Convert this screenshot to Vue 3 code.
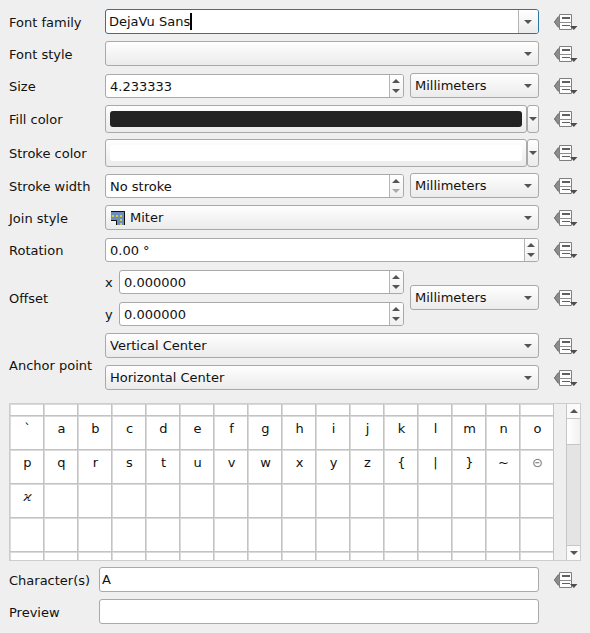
<script setup>
import { h, ref } from 'vue'

const fontFamily = ref('DejaVu Sans')
const size = ref('4.233333')
const strokeWidth = ref('No stroke')
const rotation = ref('0.00 °')
const offsetX = ref('0.000000')
const offsetY = ref('0.000000')
const characters = ref('A')
const preview = ref('')

const glyphRows = [
  [...'`abcdefghijklmno'],
  [...'pqrstuvwxyz{|}~⊝'],
  ['ϰ', ...Array(15).fill('')],
  Array(16).fill(''),
]

// Data-defined override button shown at the end of most rows
const OverrideButton = (props) =>
  h('button', { class: 'override', type: 'button', 'aria-label': props.label }, [
    h('svg', { width: 24, height: 16, viewBox: '0 0 24 16', 'aria-hidden': 'true' }, [
      h('path', { d: 'M0 8 4 2.5h1v11H4z', fill: '#8a8c8e' }),
      h('path', { d: 'M0.4 8 4.5 2.7M0.4 8l4.1 5.3', stroke: '#6f7173', fill: 'none' }),
      h('path', { d: 'M5.5.5h12v15h-12z', fill: '#fcfcfc', stroke: '#7d7f80' }),
      h('path', { d: 'M5 8.5h13', stroke: '#8b8d8e' }),
      h('path', { d: 'M8 3h8v2H8z', fill: '#5d5f61' }),
      h('path', { d: 'M8 11h8v1H8z', fill: '#5d5f61' }),
      h('path', { d: 'M16 12h7.5l-3.7 4z', fill: '#4d4d4d' }),
    ]),
  ])
OverrideButton.props = ['label']

const SpinButtons = (props) =>
  h('span', { class: 'steps' }, [
    h('button', { type: 'button', class: 'step', 'aria-label': 'Increase' }, [h('i', { class: 'up' })]),
    h('button', { type: 'button', class: 'step', 'aria-label': 'Decrease', disabled: props.atMin }, [
      h('i', { class: 'down' }),
    ]),
  ])
SpinButtons.props = ['atMin']
</script>

<template>
  <form class="panel" @submit.prevent>
    <div class="row">
      <label for="family">Font family</label>
      <div class="field editable">
        <input id="family" v-model="fontFamily" type="text" />
        <span class="caret"></span>
        <button type="button" class="drop" aria-label="Show fonts"><i class="down wide"></i></button>
      </div>
      <OverrideButton label="Override font family" />
    </div>

    <div class="row">
      <label for="style">Font style</label>
      <div class="combo"><select id="style"><option></option></select></div>
      <OverrideButton label="Override font style" />
    </div>

    <div class="row">
      <label for="size">Size</label>
      <div class="pair">
        <div class="field"><input id="size" v-model="size" type="text" /><SpinButtons /></div>
        <div class="combo unit"><select aria-label="Size unit"><option>Millimeters</option></select></div>
      </div>
      <OverrideButton label="Override size" />
    </div>

    <div class="row tall">
      <label for="fill">Fill color</label>
      <div class="color">
        <button id="fill" type="button" class="swatch"><span class="dark"></span></button>
        <button type="button" class="menu" aria-label="Fill color menu"><i class="down"></i></button>
      </div>
      <OverrideButton label="Override fill color" />
    </div>

    <div class="row tall">
      <label for="stroke">Stroke color</label>
      <div class="color">
        <button id="stroke" type="button" class="swatch"><span class="light"></span></button>
        <button type="button" class="menu" aria-label="Stroke color menu"><i class="down"></i></button>
      </div>
      <OverrideButton label="Override stroke color" />
    </div>

    <div class="row">
      <label for="width">Stroke width</label>
      <div class="pair">
        <div class="field"><input id="width" v-model="strokeWidth" type="text" /><SpinButtons :at-min="true" /></div>
        <div class="combo unit"><select aria-label="Stroke width unit"><option>Millimeters</option></select></div>
      </div>
      <OverrideButton label="Override stroke width" />
    </div>

    <div class="row">
      <label for="join">Join style</label>
      <div class="combo with-icon">
        <select id="join"><option>Miter</option></select>
        <svg class="join-icon" width="14" height="14" viewBox="0 0 14 14" aria-hidden="true">
          <path d="M0 0h14v14H5V9H0z" fill="#6c8ebb" />
          <path d="M0 .5h13.5V14M0 9.5h5.5V14" fill="none" stroke="#111" />
          <path d="M1 4h2v2H1zM5 4h2v2H5zM9 4h2v2H9zM9 8h2v2H9zM9 12h2v2H9z" fill="#d8cb3c" />
        </svg>
      </div>
      <OverrideButton label="Override join style" />
    </div>

    <div class="row">
      <label for="rotation">Rotation</label>
      <div class="field"><input id="rotation" v-model="rotation" type="text" /><SpinButtons /></div>
      <OverrideButton label="Override rotation" />
    </div>

    <div class="row">
      <span>Offset</span>
      <div class="pair">
        <div class="stack">
          <div class="axis">
            <label for="ox">x</label>
            <div class="field"><input id="ox" v-model="offsetX" type="text" /><SpinButtons /></div>
          </div>
          <div class="axis">
            <label for="oy">y</label>
            <div class="field"><input id="oy" v-model="offsetY" type="text" /><SpinButtons /></div>
          </div>
        </div>
        <div class="combo unit"><select aria-label="Offset unit"><option>Millimeters</option></select></div>
      </div>
      <OverrideButton label="Override offset" />
    </div>

    <div class="row">
      <span>Anchor point</span>
      <div class="stack anchors">
        <div class="combo"><select aria-label="Vertical anchor"><option>Vertical Center</option></select></div>
        <div class="combo"><select aria-label="Horizontal anchor"><option>Horizontal Center</option></select></div>
      </div>
      <div class="stack anchors">
        <OverrideButton label="Override vertical anchor" />
        <OverrideButton label="Override horizontal anchor" />
      </div>
    </div>

    <div class="chars">
      <table aria-label="Characters">
        <tbody>
          <tr class="cut-top"><td v-for="n in 16" :key="n"></td></tr>
          <tr v-for="(row, r) in glyphRows" :key="r">
            <td v-for="(g, c) in row" :key="c" :class="{ thin: g === '⊝', slanted: g === 'ϰ' }">{{ g }}</td>
          </tr>
          <tr class="cut-bottom"><td v-for="n in 16" :key="n"></td></tr>
        </tbody>
      </table>
      <div class="scrollbar">
        <button type="button" aria-label="Scroll up"><i class="up wide"></i></button>
        <div class="thumb"></div>
        <div class="track"></div>
        <button type="button" aria-label="Scroll down"><i class="down wide"></i></button>
      </div>
    </div>

    <div class="row low">
      <label for="chars">Character(s)</label>
      <input id="chars" v-model="characters" class="line" type="text" />
      <OverrideButton label="Override characters" />
    </div>

    <div class="row low">
      <label for="preview">Preview</label>
      <input id="preview" v-model="preview" class="line" type="text" readonly />
    </div>
  </form>
</template>

<style>
body {
  margin: 0;
  background: #efefef;
}
</style>

<style scoped>
.panel {
  display: flex;
  flex-direction: column;
  gap: 6px;
  padding: 9px 9px 8px;
  color: #111;
  font: 13px/15px "DejaVu Sans", sans-serif;
}
.panel :deep(*) {
  box-sizing: border-box;
}
.panel :deep(input),
.panel :deep(select),
.panel :deep(button) {
  margin: 0;
  color: inherit;
  font: inherit;
  outline: none;
}
.row {
  display: grid;
  grid-template-columns: 96px minmax(0, 1fr) 42px;
  align-items: center;
  min-height: 26px;
}
.row.tall {
  min-height: 28px;
}
.row.low {
  grid-template-columns: 90px minmax(0, 1fr) 42px;
}
.row > label,
.row > span {
  white-space: nowrap;
}
.field {
  display: flex;
  flex: 1;
  min-width: 0;
  height: 24px;
  overflow: hidden;
  border: 1px solid #a9a9a9;
  border-radius: 3px;
  background: #fff;
}
.field input {
  flex: 1;
  width: 0;
  min-width: 0;
  padding: 0 4px;
  border: 0;
  background: transparent;
}
.editable {
  position: relative;
  align-self: start;
  height: 25px;
  border-color: #2d73a3;
}
.editable input {
  padding: 0 3px;
  caret-color: transparent;
}
.caret {
  position: absolute;
  top: 3px;
  left: 84px;
  width: 2px;
  height: 17px;
  background: #000;
}
.drop {
  display: flex;
  align-items: center;
  justify-content: center;
  width: 20px;
  padding: 0 2px 0 0;
  border: 0;
  border-left: 1px solid #b4b4b4;
  background: linear-gradient(#fff, #ebebeb);
}
.combo {
  position: relative;
  align-self: start;
  height: 25px;
}
.combo::after {
  content: "";
  position: absolute;
  top: 11px;
  right: 7px;
  border: solid transparent;
  border-width: 4px 4px 0;
  border-top-color: #555;
  pointer-events: none;
}
.combo select {
  display: block;
  width: 100%;
  height: 25px;
  padding: 0 24px 0 4px;
  appearance: none;
  border: 1px solid #a9a9a9;
  border-radius: 3px;
  background: linear-gradient(#fefefe, #ebebeb);
}
.with-icon select {
  padding-left: 24px;
}
.join-icon {
  position: absolute;
  top: 6px;
  left: 6px;
  pointer-events: none;
}
.pair {
  display: flex;
  align-items: center;
  gap: 6px;
}
.unit {
  flex: 0 0 129px;
  align-self: center;
  height: 26px;
}
.stack {
  display: flex;
  flex: 1;
  flex-direction: column;
  gap: 6px;
}
.axis {
  display: flex;
  align-items: center;
  height: 26px;
}
.axis label {
  width: 14px;
}
.anchors {
  padding-bottom: 6px;
}
.anchors .combo {
  width: 100%;
  height: 26px;
}
.panel :deep(.steps) {
  display: flex;
  flex-direction: column;
  width: 14px;
  padding: 1px 1px 1px 0;
  border-left: 1px solid #b4b4b4;
  background: linear-gradient(#fff, #f0f0f0);
}
.panel :deep(.step) {
  display: flex;
  flex: 1;
  align-items: center;
  justify-content: center;
  min-height: 0;
  padding: 0;
  border: 0;
  background: none;
}
.panel :deep(.up),
.panel :deep(.down) {
  width: 0;
  height: 0;
  border: solid transparent;
}
.panel :deep(.up) {
  border-width: 0 4px 4px;
  border-bottom-color: #555;
}
.panel :deep(.down) {
  border-width: 4px 4px 0;
  border-top-color: #555;
}
.panel :deep(.step:disabled .down) {
  border-top-color: #aaa;
}
.color {
  display: flex;
  height: 28px;
}
.swatch,
.menu {
  display: flex;
  border: 1px solid #a9a9a9;
  border-radius: 3px;
  background: linear-gradient(#fefefe, #ebebeb);
}
.swatch {
  flex: 1;
  padding: 5px 4px;
}
.swatch span {
  flex: 1;
  height: 16px;
  border-radius: 3px;
}
.dark {
  background: #232323;
}
.light {
  background: #fff;
}
.menu {
  align-items: center;
  justify-content: center;
  width: 12px;
  padding: 0;
}
.panel :deep(.override) {
  display: flex;
  align-items: center;
  width: 42px;
  height: 26px;
  padding: 0 0 0 15px;
  border: 0;
  background: none;
}
.chars {
  display: flex;
  height: 158px;
  overflow: hidden;
  border: 1px solid #cdcdcd;
}
table {
  flex: 1;
  width: 100%;
  table-layout: fixed;
  border-collapse: separate;
  border-spacing: 0;
}
td {
  height: 34px;
  padding: 0 0 9px 2px;
  border: solid #c3c3c3;
  border-width: 0 1px 1px 0;
  background: #fff;
  box-shadow: inset 1px 0 #dadada, inset 0 1px #dadada;
  text-align: center;
}
.cut-top td {
  height: 12px;
  padding: 0;
}
.cut-bottom td {
  height: 9px;
  padding: 0;
  border-bottom: 0;
}
.thin {
  color: #777;
}
.slanted {
  font-family: "DejaVu Serif", serif;
  font-style: italic;
}
.scrollbar {
  display: flex;
  flex: 0 0 14px;
  flex-direction: column;
  margin-left: 12px;
  border-left: 1px solid #c6c6c6;
}
.scrollbar button {
  display: flex;
  align-items: center;
  justify-content: center;
  height: 14px;
  padding: 0;
  border: 0;
  background: #fafafa;
}
.thumb {
  height: 27px;
  border: solid #c6c6c6;
  border-width: 1px 0;
  background: linear-gradient(90deg, #fff, #f1f1f1);
}
.track {
  flex: 1;
  border-bottom: 1px solid #c6c6c6;
  background: #e4e4e4;
}
.line {
  align-self: start;
  width: 100%;
  height: 25px;
  padding: 0 2px;
  border: 1px solid #a9a9a9;
  border-radius: 3px;
  background: #fff;
}
</style>
